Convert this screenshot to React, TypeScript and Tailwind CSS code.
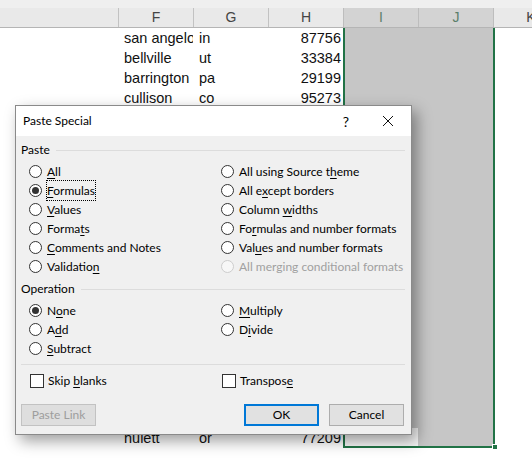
import React from "react";

type Label = [string, string, string];

const rows: { f: string; g: string; h: string }[] = [
  { f: "san angelo", g: "in", h: "87756" },
  { f: "bellville", g: "ut", h: "33384" },
  { f: "barrington", g: "pa", h: "29199" },
  { f: "cullison", g: "co", h: "95273" },
  ...Array.from({ length: 16 }).map(() => ({ f: "", g: "", h: "" })),
  { f: "hulett", g: "or", h: "77209" },
];

const pasteLeft: Label[] = [
  ["", "A", "ll"],
  ["", "F", "ormulas"],
  ["", "V", "alues"],
  ["Forma", "t", "s"],
  ["", "C", "omments and Notes"],
  ["Validatio", "n", ""],
];

const pasteRight: Label[] = [
  ["All using Source t", "h", "eme"],
  ["All e", "x", "cept borders"],
  ["Column ", "w", "idths"],
  ["Fo", "r", "mulas and number formats"],
  ["Val", "u", "es and number formats"],
];

const opLeft: Label[] = [
  ["N", "o", "ne"],
  ["A", "d", "d"],
  ["", "S", "ubtract"],
];

const opRight: Label[] = [
  ["", "M", "ultiply"],
  ["D", "i", "vide"],
];

const Text = ({ label }: { label: Label }) => (
  <span className="whitespace-nowrap">
    {label[0]}
    <span className="underline underline-offset-2">{label[1]}</span>
    {label[2]}
  </span>
);

const Radio = ({
  label,
  checked = false,
  focused = false,
}: {
  label: Label;
  checked?: boolean;
  focused?: boolean;
}) => (
  <div className="flex items-center h-[19px] gap-[5px]">
    <span className="w-[13px] h-[13px] rounded-full border border-[#333] bg-white flex items-center justify-center shrink-0">
      {checked && <span className="w-[7px] h-[7px] rounded-full bg-[#333]" />}
    </span>
    <span className={focused ? "outline-1 outline-dotted outline-black" : ""}>
      <Text label={label} />
    </span>
  </div>
);

const Check = ({ label }: { label: Label }) => (
  <div className="flex items-center h-[19px] gap-[4px]">
    <span className="w-[14px] h-[14px] border border-[#333] bg-white shrink-0" />
    <Text label={label} />
  </div>
);

const GroupHeader = ({ title }: { title: string }) => (
  <div className="flex items-center h-[16px] gap-[6px]">
    <span>{title}</span>
    <div className="flex-1 h-px bg-[#dcdcdc]" />
  </div>
);

const App: React.FC = () => {
  return (
    <div className="relative w-[532px] h-[466px] overflow-hidden bg-white font-['Liberation_Sans',Arial,sans-serif]">
      {/* Sheet */}
      <div className="h-[8px] bg-[#efefef]" />
      <div className="flex h-[20px] bg-[#e9e9e9] border-b border-[#b5b5b5] text-[14px] text-[#444] leading-[19px]">
        <div className="w-[118px] shrink-0" />
        {["F", "G", "H"].map((c) => (
          <div key={c} className="w-[75px] shrink-0 border-l border-[#c2c2c2] text-center">
            {c}
          </div>
        ))}
        {["I", "J"].map((c) => (
          <div
            key={c}
            className="w-[75px] shrink-0 border-l border-[#bdbdbd] bg-[#d3d3d3] text-center text-[#5b7f6b]"
          >
            {c}
          </div>
        ))}
        <div className="w-[75px] shrink-0 border-l border-[#bdbdbd] text-center">K</div>
      </div>

      <div className="flex flex-col text-[14.5px] text-[#111]">
        {rows.map((r, i) => {
          const last = i === rows.length - 1;
          return (
            <div key={i} className="flex h-[20px] leading-[20px]">
              <div className="w-[118px] shrink-0" />
              <div className="w-[75px] shrink-0 pl-[6px] overflow-hidden whitespace-nowrap">{r.f}</div>
              <div className="w-[75px] shrink-0 pl-[6px]">{r.g}</div>
              <div className="w-[75px] shrink-0 pr-[2px] text-right">{r.h}</div>
              <div
                className={`w-[75px] shrink-0 border-l-2 border-[#217346] ${
                  last ? "bg-[#f6f6f6] border-b-2" : "bg-[#c6c6c6]"
                }`}
              />
              <div
                className={`relative w-[77px] shrink-0 bg-[#c6c6c6] border-r-2 border-[#217346] ${
                  last ? "border-b-2" : ""
                }`}
              >
                {last && (
                  <span className="absolute right-[-5px] bottom-[-4px] w-[6px] h-[6px] bg-[#217346] border border-white" />
                )}
              </div>
            </div>
          );
        })}
      </div>

      {/* Dialog */}
      <div className="absolute left-[15px] top-[105px] w-[397px] h-[330px] flex flex-col border border-[#8a8a8a] bg-[#f0f0f0] shadow-[5px_6px_14px_rgba(0,0,0,0.38)] font-['Lato',sans-serif] text-[12px] text-black">
        <div className="flex items-center h-[30px] bg-white shrink-0">
          <span className="pl-[7px]">Paste Special</span>
          <span className="ml-auto text-[14px] mr-[33px]">?</span>
          <svg width="12" height="12" viewBox="0 0 12 12" className="mr-[17px]">
            <path d="M1 1 L11 11 M11 1 L1 11" stroke="#111" strokeWidth="1" />
          </svg>
        </div>

        <div className="flex-1 flex flex-col pl-[5px] pr-[6px] pt-[6px]">
          <GroupHeader title="Paste" />
          <div className="flex mt-[4px] ml-[8px] leading-[19px]">
            <div className="w-[192px] shrink-0 flex flex-col">
              {pasteLeft.map((l, i) => (
                <Radio key={i} label={l} checked={i === 1} focused={i === 1} />
              ))}
            </div>
            <div className="flex flex-col">
              {pasteRight.map((l, i) => (
                <Radio key={i} label={l} />
              ))}
              <div className="flex items-center h-[19px] gap-[5px] text-[#a0a0a0] whitespace-nowrap">
                <span className="w-[13px] h-[13px] rounded-full border border-[#cdcdcd] bg-[#f7f7f7] shrink-0" />
                <span>All merging conditional formats</span>
              </div>
            </div>
          </div>

          <div className="mt-[5px]">
            <GroupHeader title="Operation" />
          </div>
          <div className="flex mt-[4px] ml-[8px] leading-[19px]">
            <div className="w-[192px] shrink-0 flex flex-col">
              {opLeft.map((l, i) => (
                <Radio key={i} label={l} checked={i === 0} />
              ))}
            </div>
            <div className="flex flex-col">
              {opRight.map((l, i) => (
                <Radio key={i} label={l} />
              ))}
            </div>
          </div>

          <div className="mt-[6px] h-px bg-[#dcdcdc]" />

          <div className="flex mt-[6px] ml-[9px] leading-[19px]">
            <div className="w-[192px] shrink-0">
              <Check label={["Skip ", "b", "lanks"]} />
            </div>
            <Check label={["Transpos", "e", ""]} />
          </div>

          <div className="flex mt-[14px] h-[22px]">
            <button className="w-[75px] h-[22px] bg-[#dedede] border border-[#c2c2c2] text-[#9d9d9d]">
              Paste Link
            </button>
            <button className="ml-auto w-[75px] h-[22px] bg-[#e1e1e1] border-2 border-[#0078d7]">
              OK
            </button>
            <button className="ml-[10px] mr-[1px] w-[75px] h-[22px] bg-[#e1e1e1] border border-[#adadad]">
              Cancel
            </button>
          </div>
        </div>
      </div>
    </div>
  );
};

export default App;
